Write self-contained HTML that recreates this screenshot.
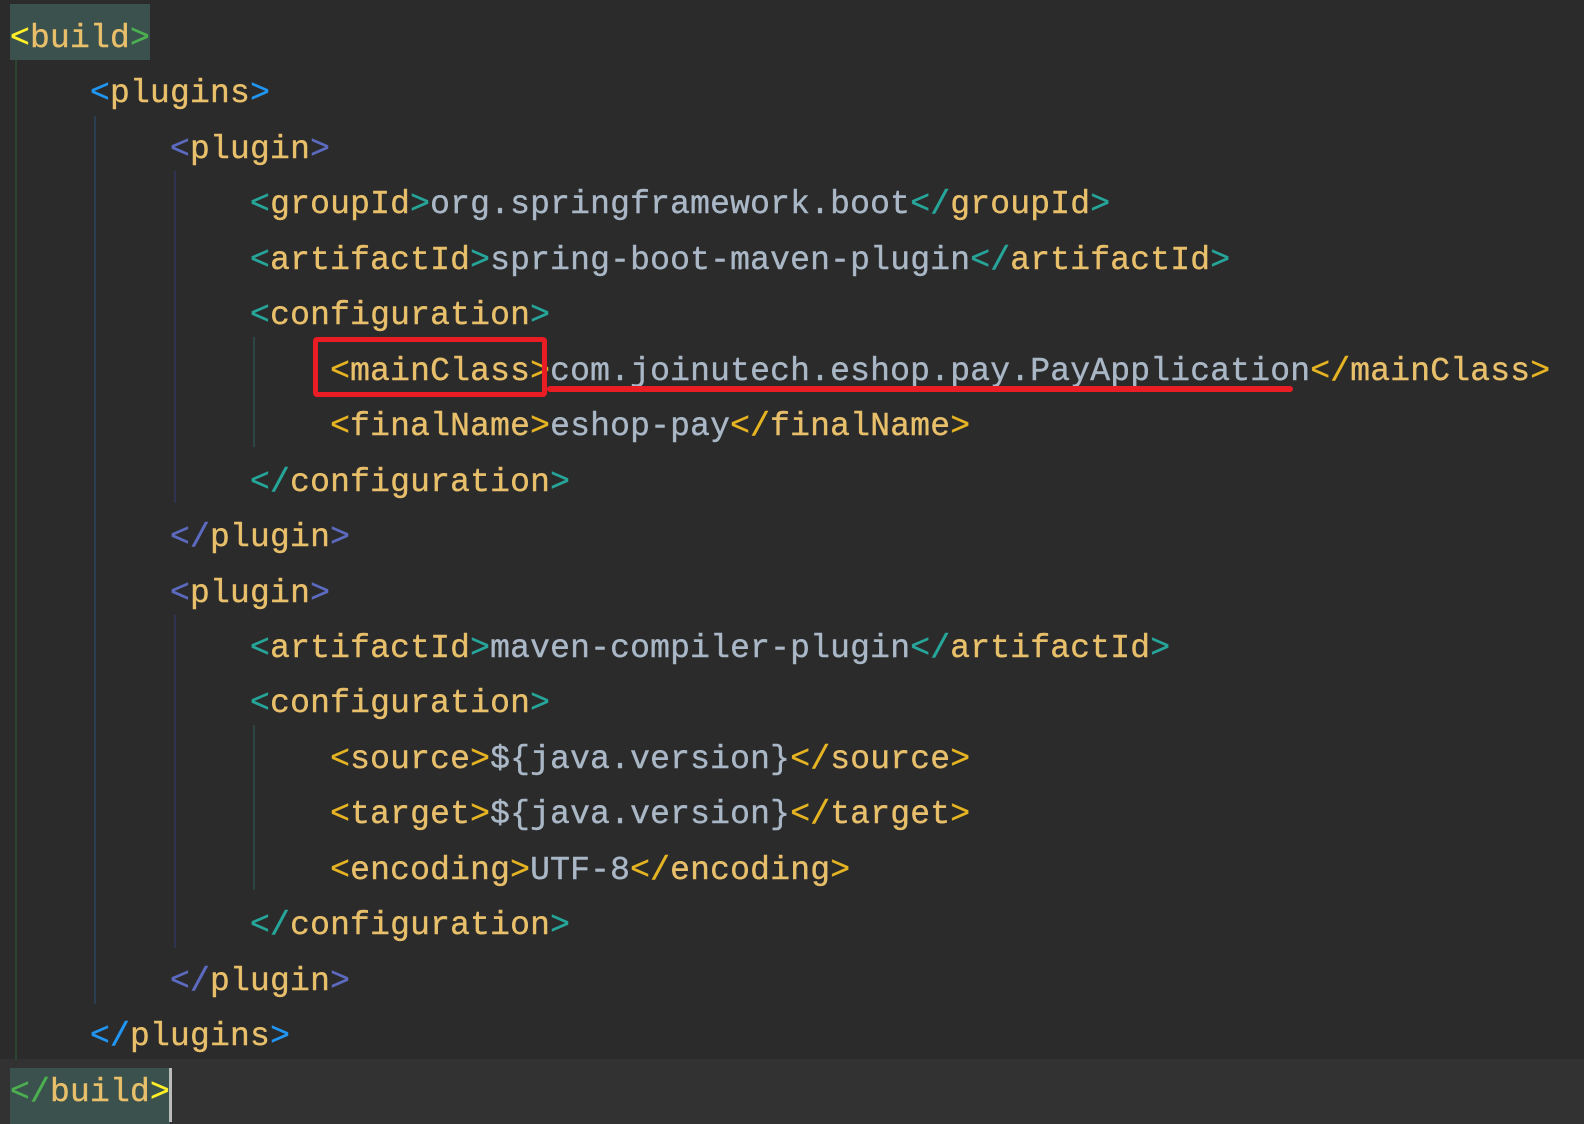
<!DOCTYPE html>
<html><head><meta charset="utf-8"><style>
html,body{margin:0;padding:0;background:#2b2b2b;width:1584px;height:1124px;overflow:hidden;position:relative}
.l{position:absolute;left:10px;height:56px;line-height:56px;padding-top:6px;font-family:"Liberation Mono",monospace;font-size:33px;white-space:pre;color:#a9b7c6;letter-spacing:0.2px;font-weight:500;-webkit-text-stroke:0.4px}
.n{color:#e8bf6a}
.b0{color:#ffef28}.g0{color:#4caf50}
.b1{color:#2196f3}.b2{color:#5c6bc0}.b3{color:#26a69a}.b4{color:#e6b422}
.guide{position:absolute;width:2px}
</style></head><body>
<div style="position:absolute;left:0;top:1059px;width:1584px;height:65px;background:#323232"></div>
<div style="position:absolute;left:10px;top:4px;width:140px;height:56px;background:#3b514d"></div>
<div style="position:absolute;left:10px;top:1068px;width:160px;height:56px;background:#3b514d"></div>
<div style="position:absolute;left:169px;top:1068px;width:3px;height:54px;background:#bbb"></div>
<div class="guide" style="left:15px;top:60px;height:1000px;background:#2f4430"></div>
<div class="guide" style="left:94px;top:116px;height:888px;background:#2b3d50"></div>
<div class="guide" style="left:174px;top:171px;height:332px;background:#303350"></div>
<div class="guide" style="left:174px;top:615px;height:333px;background:#303350"></div>
<div class="guide" style="left:253px;top:337px;height:110px;background:#2b4644"></div>
<div class="guide" style="left:253px;top:725px;height:165px;background:#2b4644"></div>

<div class="l" style="top:5px"><span class="b0">&lt;</span><span class="n">build</span><span class="g0">&gt;</span></div>
<div class="l" style="top:60px">    <span class="b1">&lt;</span><span class="n">plugins</span><span class="b1">&gt;</span></div>
<div class="l" style="top:116px">        <span class="b2">&lt;</span><span class="n">plugin</span><span class="b2">&gt;</span></div>
<div class="l" style="top:171px">            <span class="b3">&lt;</span><span class="n">groupId</span><span class="b3">&gt;</span>org.springframework.boot<span class="b3">&lt;/</span><span class="n">groupId</span><span class="b3">&gt;</span></div>
<div class="l" style="top:227px">            <span class="b3">&lt;</span><span class="n">artifactId</span><span class="b3">&gt;</span>spring-boot-maven-plugin<span class="b3">&lt;/</span><span class="n">artifactId</span><span class="b3">&gt;</span></div>
<div class="l" style="top:282px">            <span class="b3">&lt;</span><span class="n">configuration</span><span class="b3">&gt;</span></div>
<div class="l" style="top:338px">                <span class="b4">&lt;</span><span class="n">mainClass</span><span class="b4">&gt;</span>com.joinutech.eshop.pay.PayApplication<span class="b4">&lt;/</span><span class="n">mainClass</span><span class="b4">&gt;</span></div>
<div class="l" style="top:393px">                <span class="b4">&lt;</span><span class="n">finalName</span><span class="b4">&gt;</span>eshop-pay<span class="b4">&lt;/</span><span class="n">finalName</span><span class="b4">&gt;</span></div>
<div class="l" style="top:449px">            <span class="b3">&lt;/</span><span class="n">configuration</span><span class="b3">&gt;</span></div>
<div class="l" style="top:504px">        <span class="b2">&lt;/</span><span class="n">plugin</span><span class="b2">&gt;</span></div>
<div class="l" style="top:560px">        <span class="b2">&lt;</span><span class="n">plugin</span><span class="b2">&gt;</span></div>
<div class="l" style="top:615px">            <span class="b3">&lt;</span><span class="n">artifactId</span><span class="b3">&gt;</span>maven-compiler-plugin<span class="b3">&lt;/</span><span class="n">artifactId</span><span class="b3">&gt;</span></div>
<div class="l" style="top:670px">            <span class="b3">&lt;</span><span class="n">configuration</span><span class="b3">&gt;</span></div>
<div class="l" style="top:726px">                <span class="b4">&lt;</span><span class="n">source</span><span class="b4">&gt;</span>${java.version}<span class="b4">&lt;/</span><span class="n">source</span><span class="b4">&gt;</span></div>
<div class="l" style="top:781px">                <span class="b4">&lt;</span><span class="n">target</span><span class="b4">&gt;</span>${java.version}<span class="b4">&lt;/</span><span class="n">target</span><span class="b4">&gt;</span></div>
<div class="l" style="top:837px">                <span class="b4">&lt;</span><span class="n">encoding</span><span class="b4">&gt;</span>UTF-8<span class="b4">&lt;/</span><span class="n">encoding</span><span class="b4">&gt;</span></div>
<div class="l" style="top:892px">            <span class="b3">&lt;/</span><span class="n">configuration</span><span class="b3">&gt;</span></div>
<div class="l" style="top:948px">        <span class="b2">&lt;/</span><span class="n">plugin</span><span class="b2">&gt;</span></div>
<div class="l" style="top:1003px">    <span class="b1">&lt;/</span><span class="n">plugins</span><span class="b1">&gt;</span></div>
<div class="l" style="top:1059px"><span class="g0">&lt;/</span><span class="n">build</span><span class="b0">&gt;</span></div>

<div style="position:absolute;left:313px;top:337px;width:224px;height:50px;border:5px solid #ea1c24;border-radius:4px"></div>
<div style="position:absolute;left:547px;top:386px;width:746px;height:6px;background:#ea1c24;border-radius:3px"></div>
</body></html>
